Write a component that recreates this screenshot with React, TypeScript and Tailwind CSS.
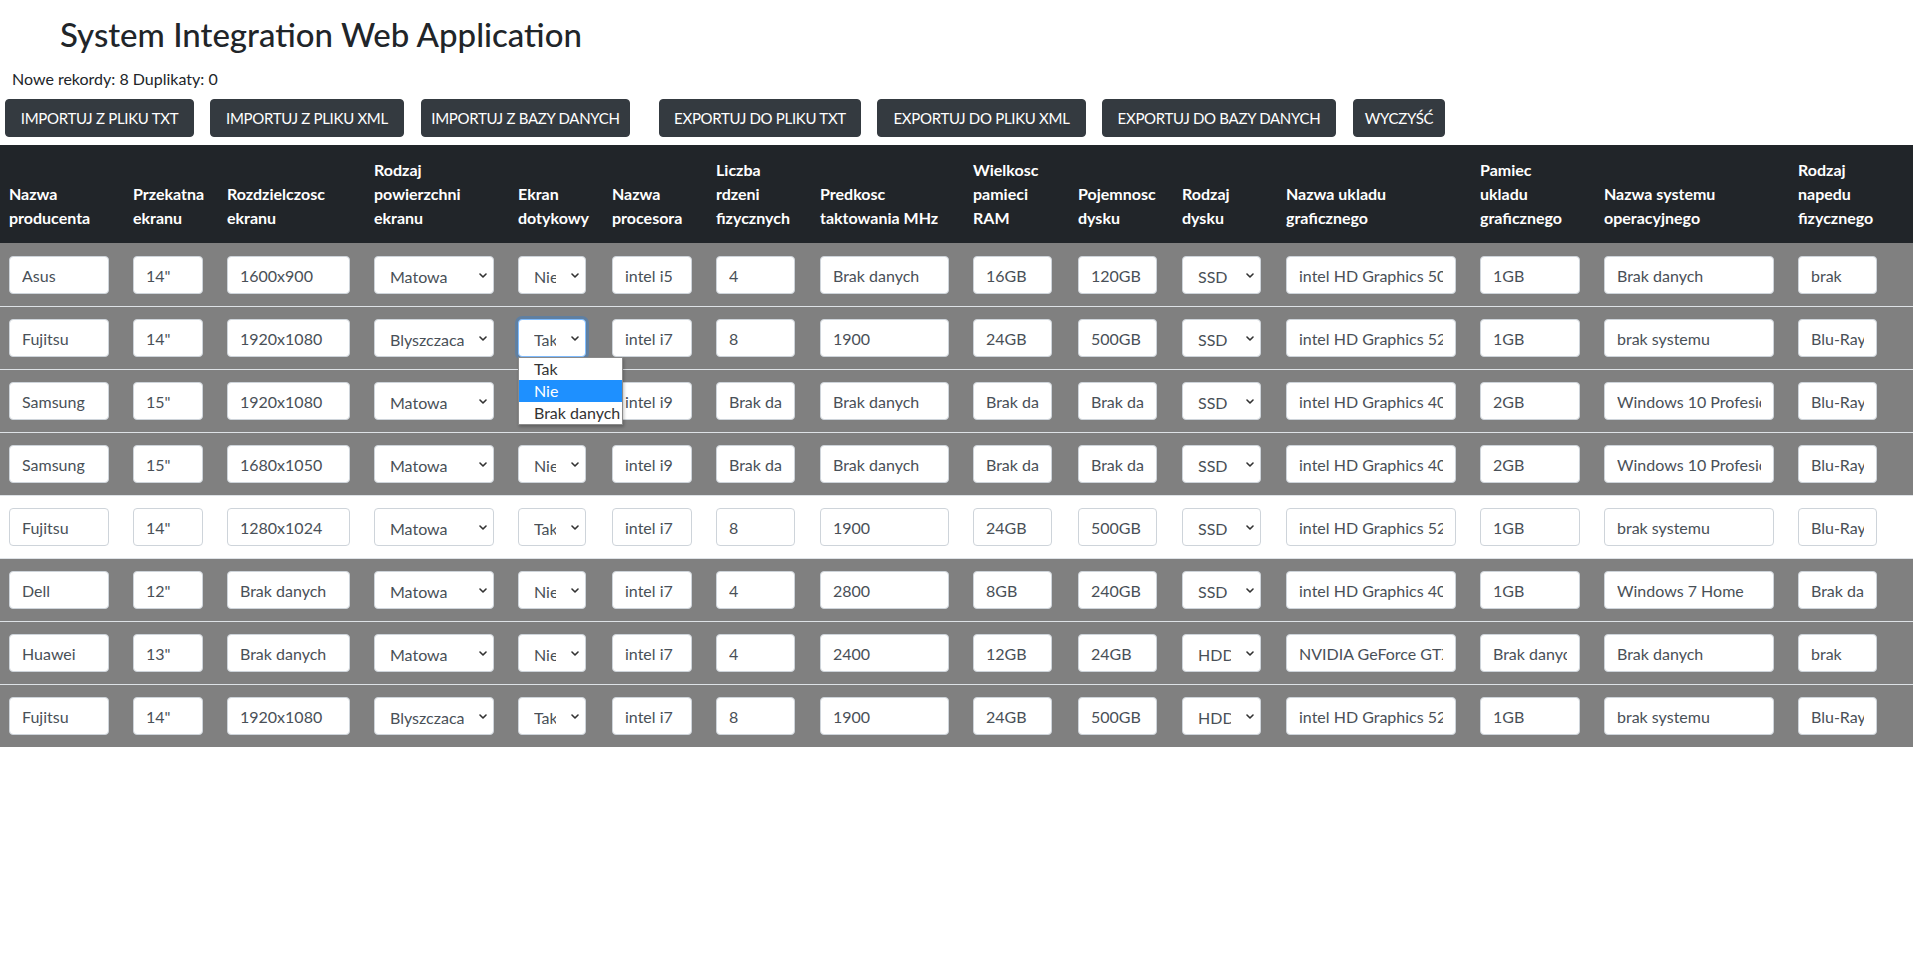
import { useState } from 'react';

const headers: string[][] = [
  ['Nazwa', 'producenta'],
  ['Przekatna', 'ekranu'],
  ['Rozdzielczosc', 'ekranu'],
  ['Rodzaj', 'powierzchni', 'ekranu'],
  ['Ekran', 'dotykowy'],
  ['Nazwa', 'procesora'],
  ['Liczba', 'rdzeni', 'fizycznych'],
  ['Predkosc', 'taktowania MHz'],
  ['Wielkosc', 'pamieci', 'RAM'],
  ['Pojemnosc', 'dysku'],
  ['Rodzaj', 'dysku'],
  ['Nazwa ukladu', 'graficznego'],
  ['Pamiec', 'ukladu', 'graficznego'],
  ['Nazwa systemu', 'operacyjnego'],
  ['Rodzaj', 'napedu', 'fizycznego'],
];

const colWidths = [
  'w-[124px]', 'w-[94px]', 'w-[147px]', 'w-[144px]', 'w-[94px]',
  'w-[104px]', 'w-[104px]', 'w-[153px]', 'w-[105px]', 'w-[104px]',
  'w-[104px]', 'w-[194px]', 'w-[124px]', 'w-[194px]', 'w-[124px]',
];

const fieldWidths = [
  'w-[100px]', 'w-[70px]', 'w-[123px]', 'w-[120px]', 'w-[68px]',
  'w-[80px]', 'w-[79px]', 'w-[129px]', 'w-[79px]', 'w-[79px]',
  'w-[79px]', 'w-[170px]', 'w-[100px]', 'w-[170px]', 'w-[79px]',
];

const selectOptions: Record<number, string[]> = {
  3: ['Matowa', 'Blyszczaca', 'Brak danych'],
  4: ['Tak', 'Nie', 'Brak danych'],
  10: ['SSD', 'HDD', 'Brak danych'],
};

const rows: string[][] = [
  ['Asus', '14"', '1600x900', 'Matowa', 'Nie', 'intel i5', '4', 'Brak danych', '16GB', '120GB', 'SSD', 'intel HD Graphics 5000', '1GB', 'Brak danych', 'brak'],
  ['Fujitsu', '14"', '1920x1080', 'Blyszczaca', 'Tak', 'intel i7', '8', '1900', '24GB', '500GB', 'SSD', 'intel HD Graphics 520', '1GB', 'brak systemu', 'Blu-Ray'],
  ['Samsung', '15"', '1920x1080', 'Matowa', 'Nie', 'intel i9', 'Brak danych', 'Brak danych', 'Brak danych', 'Brak danych', 'SSD', 'intel HD Graphics 4000', '2GB', 'Windows 10 Profesional', 'Blu-Ray'],
  ['Samsung', '15"', '1680x1050', 'Matowa', 'Nie', 'intel i9', 'Brak danych', 'Brak danych', 'Brak danych', 'Brak danych', 'SSD', 'intel HD Graphics 4000', '2GB', 'Windows 10 Profesional', 'Blu-Ray'],
  ['Fujitsu', '14"', '1280x1024', 'Matowa', 'Tak', 'intel i7', '8', '1900', '24GB', '500GB', 'SSD', 'intel HD Graphics 520', '1GB', 'brak systemu', 'Blu-Ray'],
  ['Dell', '12"', 'Brak danych', 'Matowa', 'Nie', 'intel i7', '4', '2800', '8GB', '240GB', 'SSD', 'intel HD Graphics 4000', '1GB', 'Windows 7 Home', 'Brak danych'],
  ['Huawei', '13"', 'Brak danych', 'Matowa', 'Nie', 'intel i7', '4', '2400', '12GB', '24GB', 'HDD', 'NVIDIA GeForce GTX 1050', 'Brak danych', 'Brak danych', 'brak'],
  ['Fujitsu', '14"', '1920x1080', 'Blyszczaca', 'Tak', 'intel i7', '8', '1900', '24GB', '500GB', 'HDD', 'intel HD Graphics 520', '1GB', 'brak systemu', 'Blu-Ray'],
];

const buttons = [
  { label: 'IMPORTUJ Z PLIKU TXT', cls: 'ml-[5px] w-[189px]' },
  { label: 'IMPORTUJ Z PLIKU XML', cls: 'ml-[16px] w-[194px]' },
  { label: 'IMPORTUJ Z BAZY DANYCH', cls: 'ml-[17px] w-[209px]' },
  { label: 'EXPORTUJ DO PLIKU TXT', cls: 'ml-[29px] w-[202px]' },
  { label: 'EXPORTUJ DO PLIKU XML', cls: 'ml-[16px] w-[209px]' },
  { label: 'EXPORTUJ DO BAZY DANYCH', cls: 'ml-[16px] w-[234px]' },
  { label: 'WYCZYŚĆ', cls: 'ml-[17px] w-[92px]' },
];

const Chevron = () => (
  <svg
    width="8"
    height="5"
    viewBox="0 0 8 5"
    className="absolute right-[7px] top-[17px] pointer-events-none"
  >
    <path d="M1 1l3 3 3-3" stroke="#333" strokeWidth="1.6" fill="none" strokeLinecap="round" strokeLinejoin="round" />
  </svg>
);

const App = () => {
  const [openCell] = useState({ row: 1, col: 4 });

  return (
    <div className="font-['Lato',sans-serif] text-[#212529] bg-white min-h-[966px]">
      <h1 className="ml-[60px] pt-[13px] text-[33px] leading-[43px] font-medium">
        System Integration Web Application
      </h1>
      <p className="pl-[12px] mt-[11px] text-[16px] leading-6">Nowe rekordy: 8 Duplikaty: 0</p>
      <div className="flex mt-[8px]">
        {buttons.map((b) => (
          <button
            key={b.label}
            className={`${b.cls} h-[38px] rounded-[4px] bg-[#343a40] border border-[#343a40] text-white text-[15px] tracking-[-0.3px] text-center whitespace-nowrap`}
          >
            {b.label}
          </button>
        ))}
      </div>
      <table className="mt-[8px] w-full table-fixed border-collapse">
        <colgroup>
          {colWidths.map((w, i) => (
            <col key={i} className={w} />
          ))}
        </colgroup>
        <thead>
          <tr className="bg-[#212529]">
            {headers.map((h, i) => (
              <th
                key={i}
                className="pl-[9px] pr-0 py-[13px] align-bottom text-left font-bold text-white text-[16px] leading-6 whitespace-nowrap"
              >
                {h.map((line, j) => (
                  <div key={j}>{line}</div>
                ))}
              </th>
            ))}
          </tr>
        </thead>
        <tbody>
          {rows.map((row, r) => (
            <tr
              key={r}
              className={`${r === 0 ? 'border-t border-[#808080]' : 'border-t border-[#dee2e6]'} ${r === 4 ? 'bg-white' : 'bg-[#808080]'}`}
            >
              {row.map((val, c) => {
                const opts = selectOptions[c];
                if (opts) {
                  const isOpen = openCell.row === r && openCell.col === c;
                  return (
                    <td key={c} className="pl-[9px] pr-0 py-[12px]">
                      <div className={`relative ${fieldWidths[c]}`}>
                        <select
                          defaultValue={val}
                          className={`block w-full h-[38px] appearance-none bg-white rounded-[4px] border pl-[15px] pr-[29px] pt-[3px] text-[16px] text-[#495057] outline-none ${
                            isOpen
                              ? 'border-[#80bdff] shadow-[0_0_0_3px_rgba(0,123,255,0.25)]'
                              : 'border-[#ced4da]'
                          }`}
                        >
                          {opts.map((o) => (
                            <option key={o}>{o}</option>
                          ))}
                        </select>
                        <Chevron />
                        {isOpen && (
                          <div className="absolute left-0 top-[38px] z-10 w-[105px] bg-white border border-[#8a8a8a] shadow-[1px_2px_3px_rgba(0,0,0,0.25)] text-[16px] text-[#333]">
                            {opts.map((o) => (
                              <div
                                key={o}
                                className={`h-[22px] leading-[22px] pl-[15px] whitespace-nowrap ${
                                  o === 'Nie' ? 'bg-[#1e90ff] text-white' : ''
                                }`}
                              >
                                {o}
                              </div>
                            ))}
                          </div>
                        )}
                      </div>
                    </td>
                  );
                }
                return (
                  <td key={c} className="pl-[9px] pr-0 py-[12px]">
                    <input
                      type="text"
                      defaultValue={val}
                      className={`block ${fieldWidths[c]} h-[38px] bg-white rounded-[4px] border border-[#ced4da] px-[12px] text-[16px] text-[#495057] outline-none`}
                    />
                  </td>
                );
              })}
            </tr>
          ))}
        </tbody>
      </table>
    </div>
  );
};

export default App;
